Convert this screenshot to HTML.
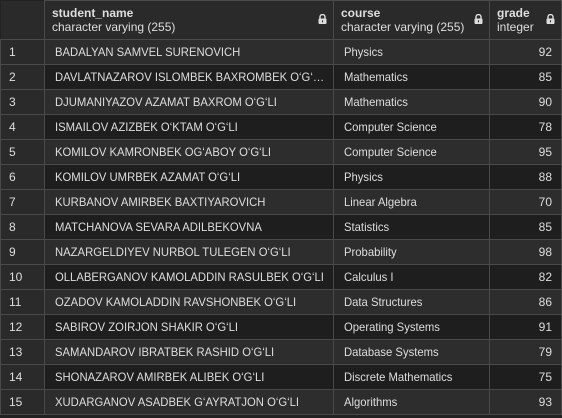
<!DOCTYPE html>
<html><head><style>
*{margin:0;padding:0;box-sizing:border-box}
body{width:562px;height:418px;background:#222;font-family:"Liberation Sans",sans-serif;color:#dedede;overflow:hidden}
table{border-collapse:collapse;table-layout:fixed;position:absolute;left:0;top:0;width:561px}
td,th{border:1px solid #4a4a4a;font-size:12px;white-space:nowrap;overflow:hidden}
th{height:39px;background:#2a2a2a;text-align:left;font-weight:normal;vertical-align:top;padding:5px 4px 0 7px;position:relative;line-height:14px}
th b{font-weight:bold;display:block}
td{height:25px;padding:0 4px 0 10px}
td span{display:inline-block;transform:scaleX(0.94);transform-origin:0 50%}
tr:nth-child(odd) td{background:#2d2d2d}
tr:nth-child(even) td{background:#1e1e1e}
tr td.n{background:#2a2a2a!important;padding-left:8px}
td.g{text-align:right;padding-right:9px}
.lk{position:absolute;right:6px;top:13px;width:9px;height:10px}
th:first-child{border-left:none;border-top:none}
</style></head><body>
<table>
<colgroup><col style="width:44px"><col style="width:289px"><col style="width:156px"><col style="width:72px"></colgroup>
<thead><tr>
<th></th>
<th><b>student_name</b>character varying (255)<svg class="lk" viewBox="0 0 9 10"><path d="M2 5V3a2.5 2.5 0 0 1 5 0v2" fill="none" stroke="#ddd" stroke-width="1.4"/><rect x="0.5" y="4.5" width="8" height="5.5" rx="1" fill="#ddd"/><rect x="4" y="6.3" width="1" height="2" fill="#2a2a2a"/></svg></th>
<th><b>course</b>character varying (255)<svg class="lk" viewBox="0 0 9 10"><path d="M2 5V3a2.5 2.5 0 0 1 5 0v2" fill="none" stroke="#ddd" stroke-width="1.4"/><rect x="0.5" y="4.5" width="8" height="5.5" rx="1" fill="#ddd"/><rect x="4" y="6.3" width="1" height="2" fill="#2a2a2a"/></svg></th>
<th><b>grade</b>integer<svg class="lk" viewBox="0 0 9 10"><path d="M2 5V3a2.5 2.5 0 0 1 5 0v2" fill="none" stroke="#ddd" stroke-width="1.4"/><rect x="0.5" y="4.5" width="8" height="5.5" rx="1" fill="#ddd"/><rect x="4" y="6.3" width="1" height="2" fill="#2a2a2a"/></svg></th>
</tr></thead>
<tbody>
<tr><td class="n">1</td><td><span>BADALYAN SAMVEL SURENOVICH</span></td><td><span>Physics</span></td><td class="g">92</td></tr>
<tr><td class="n">2</td><td><span>DAVLATNAZAROV ISLOMBEK BAXROMBEK O‘G‘…</span></td><td><span>Mathematics</span></td><td class="g">85</td></tr>
<tr><td class="n">3</td><td><span>DJUMANIYAZOV AZAMAT BAXROM O‘G‘LI</span></td><td><span>Mathematics</span></td><td class="g">90</td></tr>
<tr><td class="n">4</td><td><span>ISMAILOV AZIZBEK O‘KTAM O‘G‘LI</span></td><td><span>Computer Science</span></td><td class="g">78</td></tr>
<tr><td class="n">5</td><td><span>KOMILOV KAMRONBEK OG‘ABOY O‘G‘LI</span></td><td><span>Computer Science</span></td><td class="g">95</td></tr>
<tr><td class="n">6</td><td><span>KOMILOV UMRBEK AZAMAT O‘G‘LI</span></td><td><span>Physics</span></td><td class="g">88</td></tr>
<tr><td class="n">7</td><td><span>KURBANOV AMIRBEK BAXTIYAROVICH</span></td><td><span>Linear Algebra</span></td><td class="g">70</td></tr>
<tr><td class="n">8</td><td><span>MATCHANOVA SEVARA ADILBEKOVNA</span></td><td><span>Statistics</span></td><td class="g">85</td></tr>
<tr><td class="n">9</td><td><span>NAZARGELDIYEV NURBOL TULEGEN O‘G‘LI</span></td><td><span>Probability</span></td><td class="g">98</td></tr>
<tr><td class="n">10</td><td><span>OLLABERGANOV KAMOLADDIN RASULBEK O‘G‘LI</span></td><td><span>Calculus I</span></td><td class="g">82</td></tr>
<tr><td class="n">11</td><td><span>OZADOV KAMOLADDIN RAVSHONBEK O‘G‘LI</span></td><td><span>Data Structures</span></td><td class="g">86</td></tr>
<tr><td class="n">12</td><td><span>SABIROV ZOIRJON SHAKIR O‘G‘LI</span></td><td><span>Operating Systems</span></td><td class="g">91</td></tr>
<tr><td class="n">13</td><td><span>SAMANDAROV IBRATBEK RASHID O‘G‘LI</span></td><td><span>Database Systems</span></td><td class="g">79</td></tr>
<tr><td class="n">14</td><td><span>SHONAZAROV AMIRBEK ALIBEK O‘G‘LI</span></td><td><span>Discrete Mathematics</span></td><td class="g">75</td></tr>
<tr><td class="n">15</td><td><span>XUDARGANOV ASADBEK G‘AYRATJON O‘G‘LI</span></td><td><span>Algorithms</span></td><td class="g">93</td></tr>
</tbody></table>
</body></html>
